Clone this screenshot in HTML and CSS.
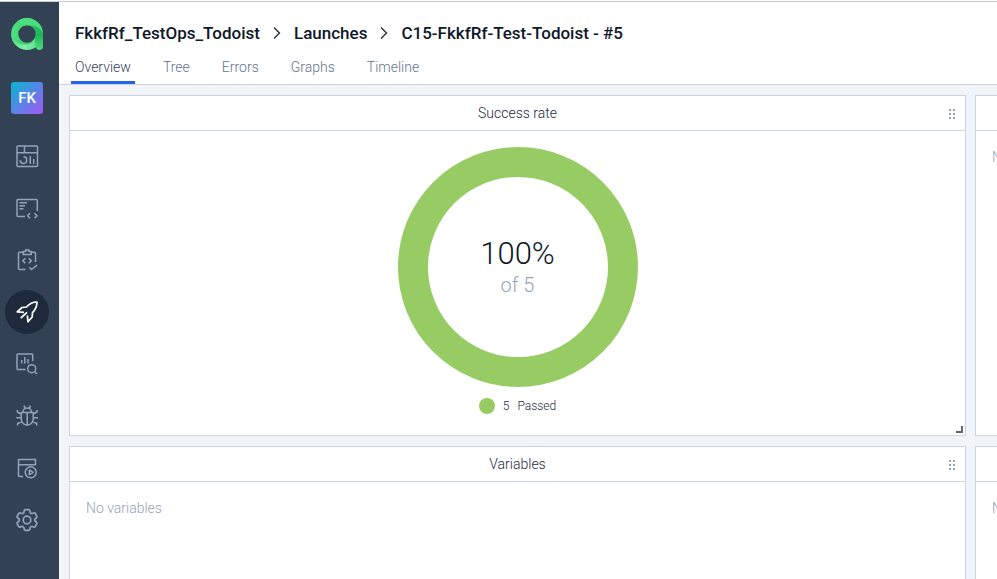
FILE: index.html
```html
<!DOCTYPE html>
<html lang="en">
<head>
<meta charset="utf-8">
<title>C15-FkkfRf-Test-Todoist - #5</title>
<link rel="stylesheet" href="styles.css">
</head>
<body>
<div class="app">
  <nav class="sidebar" aria-label="Main">
    <a class="logo" href="#" aria-label="Home">
      <svg viewBox="0 0 32 32" width="32" height="32">
        <defs>
          <linearGradient id="ring" x1="0" y1="0" x2="1" y2="0">
            <stop offset="0" stop-color="#4ade80"/><stop offset="0.5" stop-color="#34cf68"/><stop offset="1" stop-color="#22b858"/>
          </linearGradient>
          <linearGradient id="sweep" x1="0" y1="0" x2="1" y2="0">
            <stop offset="0" stop-color="#4bdc7c"/><stop offset="0.5" stop-color="#86efac"/><stop offset="1" stop-color="#5fe08a"/>
          </linearGradient>
          <linearGradient id="stem" x1="0" y1="0" x2="0" y2="1">
            <stop offset="0" stop-color="#1fb254"/><stop offset="1" stop-color="#4ade80"/>
          </linearGradient>
        </defs>
        <circle cx="16" cy="16" r="12.3" fill="none" stroke="url(#ring)" stroke-width="7.2"/>
        <path d="M0.500 19C2 22 6 26 12 26.500C17 27 21 25.500 23.500 20.500L25.500 28.700A15.900 15.900 0 0 1 0.500 19Z" fill="url(#sweep)"/>
        <path d="M24.700 16H32V28.500C32 30.800 30.500 32 28.500 32C26 32 24.700 30.500 24.700 28Z" fill="url(#stem)"/>
        <path d="M8 2.200A15.900 15.900 0 0 1 31.900 16C31 11 25 6.500 17 7.300C12 7.500 9 6 8 2.200Z" fill="#4ade80"/>
      </svg>
    </a>
    <a class="project" href="#">FK</a>
    <div class="menu">
      <a class="item" href="#" aria-label="Dashboards"><svg class="icon" viewBox="0 0 24 24"><rect x="2" y="2" width="20.500" height="20.500" rx="1"/><path d="M2 8.700H22.500M9.500 2V8.700M8.500 12.800A3.300 3.300 0 1 1 5.200 16.200M15.300 12V20M18.700 15V20"/></svg></a>
      <a class="item" href="#" aria-label="Test cases"><svg class="icon" viewBox="0 0 24 24"><path d="M10 20.500H3A1 1 0 0 1 2 19.500V4.500A1 1 0 0 1 3 3.500H21.300A1 1 0 0 1 22.300 4.500V15M4.500 6.800H12M4.500 9.800H10M4.500 12.800H8.500M15 17.200L12.500 19.700L15 22.200M19.500 17.200L22 19.700L19.500 22.200"/></svg></a>
      <a class="item" href="#" aria-label="Test plans"><svg class="icon" viewBox="0 0 24 24"><path d="M10.500 21.500H4.500A1 1 0 0 1 3.500 20.500V5.300A1 1 0 0 1 4.500 4.300H8M16.500 4.300H19.500A1 1 0 0 1 20.500 5.300V14M10.300 10.200L7.800 12.700L10.300 15.200M13.800 10.200L16.300 12.700L13.800 15.200M14.300 19.300L16.500 21.500L22 17.200"/><path d="M8.200 6.500V3.500H10.500V2H14V3.500H16.300V6.500Z"/></svg></a>
      <a class="item active" href="#" aria-label="Launches" aria-current="page"><svg class="icon" viewBox="0 0 24 24"><path d="M9 12.300L2.200 11.800L7 7.500L11.500 7C14.500 3.500 18 2 22 2C22 6 20.500 9.500 17.500 12.700L17.200 17L13 21.800L12.400 15.500M5.800 18L12 12.300"/></svg></a>
      <a class="item" href="#" aria-label="Analytics"><svg class="icon" viewBox="0 0 24 24"><path d="M10.500 17.500H3A1 1 0 0 1 2 16.500V3A1 1 0 0 1 3 2H16.700A1 1 0 0 1 17.700 3V9M6.700 8V11.500M9.800 5V11.500M13 7V11.500M19.700 19.700L22 22"/><circle cx="16.700" cy="16.700" r="4"/></svg></a>
      <a class="item" href="#" aria-label="Defects"><svg class="icon" viewBox="0 0 24 24"><path d="M6.200 8.500H18.200V15A6 6 0 0 1 6.200 15ZM7.800 8.500A4.400 4.400 0 0 1 16.600 8.500M12.200 8.500V21M9.300 1.500V3L10.500 4.300M15.100 1.500V3L13.900 4.300M2.300 6V8L6.200 10M22 6V8L18.200 10M1.300 13.700H6.200M18.200 13.700H23M2.600 21.500V19.500L6.700 17.500M21.800 21.500V19.500L17.700 17.500"/></svg></a>
      <a class="item" href="#" aria-label="Jobs"><svg class="icon" viewBox="0 0 24 24"><path d="M8 20.500H4.500A1 1 0 0 1 3.500 19.500V3.500H20.500V8.700H3.500M14.300 14L18.200 16.300L14.300 18.700Z"/><circle cx="15.700" cy="16.300" r="5.500"/></svg></a>
      <a class="item" href="#" aria-label="Settings"><svg class="icon" viewBox="1.600 1.600 20.800 20.800"><path d="M9.594 3.940c.09-.542.56-.94 1.110-.94h2.593c.55 0 1.020.398 1.110.94l.213 1.281c.063.374.313.686.645.87.074.04.147.083.22.127.325.196.72.257 1.075.124l1.217-.456a1.125 1.125 0 0 1 1.370.49l1.296 2.247a1.125 1.125 0 0 1-.26 1.431l-1.003.827c-.293.241-.438.613-.43.992a7.723 7.723 0 0 1 0 .255c-.008.378.137.75.43.991l1.004.827c.424.35.534.955.26 1.430l-1.298 2.247a1.125 1.125 0 0 1-1.369.491l-1.217-.456c-.355-.133-.75-.072-1.076.124a6.470 6.470 0 0 1-.22.128c-.331.183-.581.495-.644.869l-.213 1.281c-.09.543-.56.94-1.110.94h-2.594c-.55 0-1.019-.398-1.110-.94l-.213-1.281c-.062-.374-.312-.686-.644-.87a6.520 6.520 0 0 1-.22-.127c-.325-.196-.72-.257-1.076-.124l-1.217.456a1.125 1.125 0 0 1-1.369-.49l-1.297-2.247a1.125 1.125 0 0 1 .26-1.431l1.004-.827c.292-.24.437-.613.43-.991a6.932 6.932 0 0 1 0-.255c.007-.38-.138-.751-.43-.992l-1.004-.827a1.125 1.125 0 0 1-.26-1.430l1.297-2.247a1.125 1.125 0 0 1 1.370-.491l1.216.456c.356.133.751.072 1.076-.124.072-.044.146-.086.22-.128.332-.183.582-.495.644-.869l.214-1.280Z"/><circle cx="12" cy="12" r="3.300"/></svg></a>
    </div>
  </nav>

  <main class="main">
    <header class="header">
      <h1 class="crumbs">
        <a href="#">FkkfRf_TestOps_Todoist</a>
        <svg class="chevron" viewBox="0 0 12 16"><path d="M3 2.500L8.500 8L3 13.500"/></svg>
        <a href="#">Launches</a>
        <svg class="chevron" viewBox="0 0 12 16"><path d="M3 2.500L8.500 8L3 13.500"/></svg>
        <span>C15-FkkfRf-Test-Todoist - #5</span>
      </h1>
      <nav class="tabs" aria-label="Launch">
        <a class="tab current" href="#">Overview</a>
        <a class="tab" href="#">Tree</a>
        <a class="tab" href="#">Errors</a>
        <a class="tab" href="#">Graphs</a>
        <a class="tab" href="#">Timeline</a>
      </nav>
    </header>

    <div class="board">
      <section class="panel">
        <div class="panel-head"><h2>Success rate</h2>
          <button class="grip" aria-label="Move"><svg viewBox="0 0 8 12" width="8" height="12"><path d="M0 2H3M4 2H7M0 6H3M4 6H7M0 10H3M4 10H7"/></svg></button>
        </div>
        <div class="panel-body chart">
          <div class="donut">
            <strong>100%</strong>
            <span>of 5</span>
          </div>
          <div class="legend"><i class="dot"></i><span>5</span><span>Passed</span></div>
        </div>
        <svg class="resize" viewBox="0 0 7 7" width="7" height="7"><path d="M7 0V7H0V5H5V0Z"/></svg>
      </section>
      <section class="panel">
        <div class="panel-head"></div>
        <div class="panel-body"><p>No data</p></div>
      </section>
      <section class="panel">
        <div class="panel-head"><h2>Variables</h2>
          <button class="grip" aria-label="Move"><svg viewBox="0 0 8 12" width="8" height="12"><path d="M0 2H3M4 2H7M0 6H3M4 6H7M0 10H3M4 10H7"/></svg></button>
        </div>
        <div class="panel-body"><p>No variables</p></div>
      </section>
      <section class="panel">
        <div class="panel-head"></div>
        <div class="panel-body"><p>No data</p></div>
      </section>
    </div>
  </main>
</div>
</body>
</html>
```
FILE: styles.css
```css
* {
  box-sizing: border-box;
}

body {
  margin: 0;
  font: 350 14px/20px Roboto, "Liberation Sans", sans-serif;
  color: #1e293b;
  background: #fff;
}

a {
  color: inherit;
  text-decoration: none;
}

h1, h2, p {
  margin: 0;
}

.app {
  display: flex;
  height: 100vh;
  padding-top: 2px;
  overflow: hidden;
  background: linear-gradient(#fff 1px, #c9ccd0 1px 2px, #fff 2px);
}

/* Sidebar */
.sidebar {
  display: flex;
  flex: none;
  flex-direction: column;
  align-items: center;
  width: 59px;
  padding: 16px 10px 0 5px;
  background: #334155;
}

.logo {
  height: 32px;
}

.project {
  width: 32px;
  height: 32px;
  margin: 32px 0 20px;
  border-radius: 3px;
  background: linear-gradient(135deg, #06b6d4, #a855f7);
  color: #fff;
  font-size: 15px;
  font-weight: 500;
  line-height: 33px;
  text-align: center;
}

.menu {
  display: grid;
  gap: 8px;
}

.item {
  display: grid;
  place-items: center;
  width: 44px;
  height: 44px;
  border-radius: 50%;
  color: #94a3b8;
}

.item.active {
  background: #1e293b;
  color: #fff;
}

.icon {
  width: 24px;
  height: 24px;
  fill: none;
  stroke: currentColor;
  stroke-width: 1.5;
  stroke-linejoin: round;
}

.active .icon {
  stroke-width: 1.7;
}

/* Header */
.main {
  display: flex;
  flex: 1;
  flex-direction: column;
  min-width: 0;
}

.header {
  padding: 19px 16px 0;
  border-bottom: 1px solid #cbd5e1;
}

.crumbs {
  display: flex;
  align-items: center;
  gap: 11px;
  color: #0f172a;
  font-size: 17px;
  font-weight: 500;
  line-height: 24px;
  white-space: nowrap;
}

.chevron {
  width: 12px;
  height: 16px;
  fill: none;
  stroke: #1e293b;
  stroke-width: 1.3;
}

.tabs {
  display: flex;
  gap: 24px;
  margin: 12px -4px 0;
}

.tab {
  padding: 0 4px 3px;
  border-bottom: 3px solid transparent;
  color: #64748b;
  line-height: 21px;
}

.tab.current {
  border-color: #2563eb;
  color: #334155;
}

/* Widget board; the second column runs past the window edge */
.board {
  display: grid;
  flex: 1;
  grid-template-columns: repeat(2, calc(100% - 21px));
  grid-auto-rows: 341px;
  gap: 10px 9px;
  min-height: 0;
  padding: 10px;
  overflow: hidden;
  background: #f1f5f9;
}

.panel {
  position: relative;
  display: flex;
  flex-direction: column;
  border: 1px solid #cbd5e1;
  background: #fff;
}

.panel-head {
  display: flex;
  align-items: center;
  justify-content: center;
  height: 35px;
  border-bottom: 1px solid #cbd5e1;
}

.panel-head h2 {
  font-size: 14px;
  font-weight: inherit;
}

.grip {
  position: absolute;
  top: 12px;
  right: 8px;
  height: 12px;
  padding: 0;
  border: 0;
  background: none;
  line-height: 0;
}

.grip path {
  fill: none;
  stroke: #94a3b8;
  stroke-width: 2;
  stroke-dasharray: 2 1;
}

.panel-body {
  padding: 16px;
  color: #94a3b8;
}

.chart {
  display: flex;
  flex-direction: column;
  align-items: center;
  gap: 11px;
}

.donut {
  display: flex;
  flex-direction: column;
  align-items: center;
  justify-content: center;
  width: 240px;
  height: 240px;
  border: 30px solid #97cc64;
  border-radius: 50%;
  font-size: 20px;
  line-height: 26px;
}

.donut strong {
  color: #0f172a;
  font-size: 31px;
  font-weight: 300;
  line-height: 36px;
}

.legend {
  display: flex;
  align-items: center;
  gap: 8px;
  color: #1e293b;
  font-size: 12px;
  line-height: 16px;
}

.dot {
  width: 16px;
  height: 16px;
  border-radius: 50%;
  background: #97cc64;
}

.resize {
  position: absolute;
  right: 2px;
  bottom: 2px;
  fill: #666;
}
```
